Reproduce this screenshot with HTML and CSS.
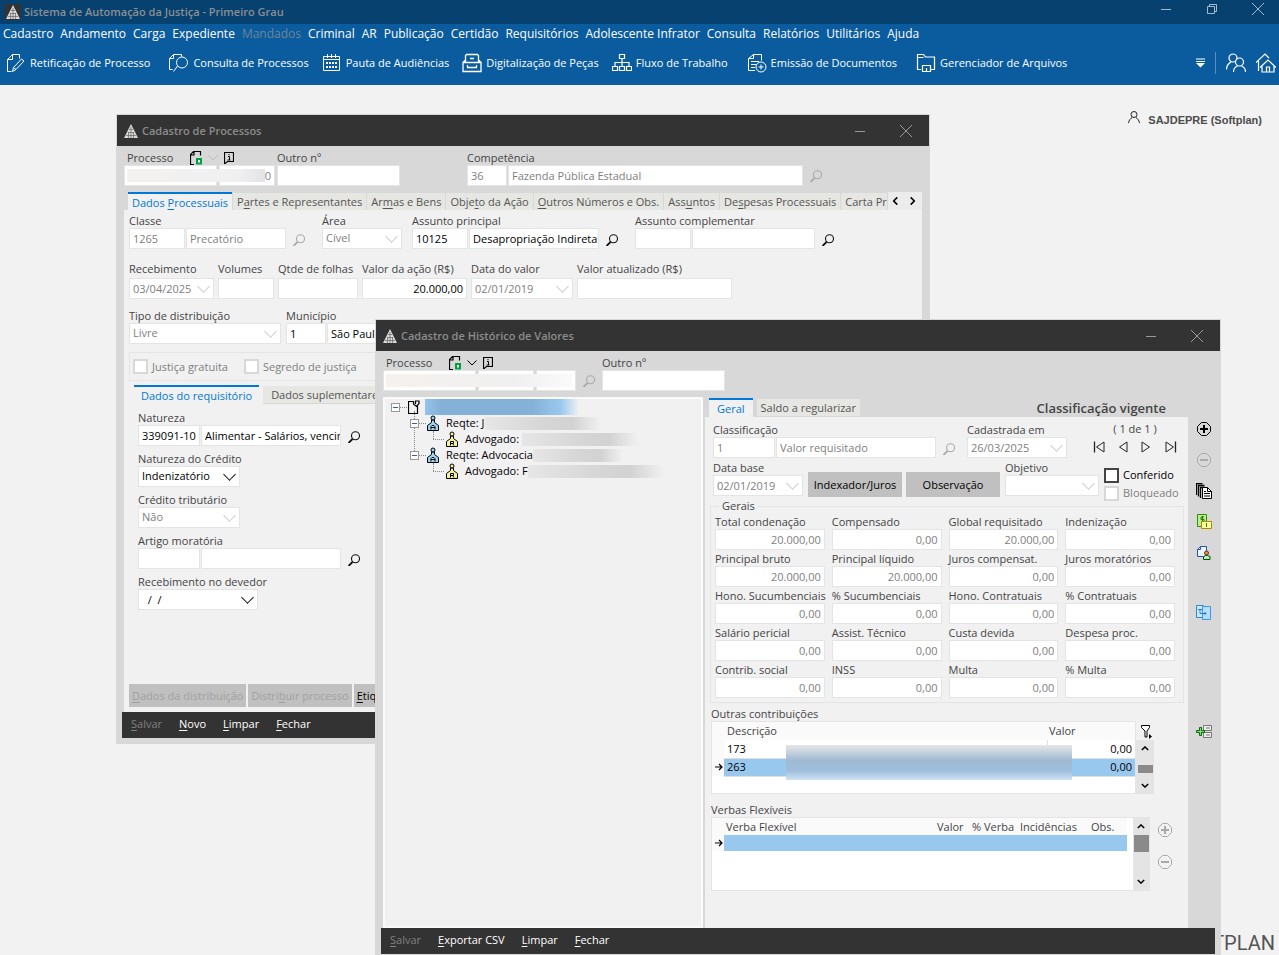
FILE: index.html
```html
<!DOCTYPE html>
<html lang="pt-BR">
<head>
    <meta charset="UTF-8">
    <meta name="viewport" content="width=device-width, initial-scale=1.0">
    <title>Sistema de Automação da Justiça - Primeiro Grau</title>
    <link rel="stylesheet" href="styles.css">
</head>
<body>
    <!-- icons -->
    <svg class="sprite" aria-hidden="true">
        <symbol id="logo" viewBox="0 0 14 14">
            <path d="M7 0L14 14H0z" fill="#d8d8d8"/>
            <path d="M5 5.500h4M4 8.500h6M2 11.500h10M7 3v11M4.500 8v6M9.500 8v6" stroke="#555" stroke-width=".6" fill="none"/>
        </symbol>
        <symbol id="i-min" viewBox="0 0 12 12"><path d="M1 6.5h10" stroke="currentColor" fill="none"/></symbol>
        <symbol id="i-restore" viewBox="0 0 12 12"><path d="M1.5 3.5h7v7h-7zM3.5 3.5v-2h7v7h-2" stroke="currentColor" fill="none"/></symbol>
        <symbol id="i-close" viewBox="0 0 12 12"><path d="M0 0L12 12M12 0L0 12" stroke="currentColor" fill="none"/></symbol>
        <symbol id="i-edit" viewBox="0 0 20 20"><path d="M5.500 18.500h-4v-12l5-5h7v4M1.500 6.500h5v-5M7.500 14.500l8-8.500 2.500 2-8 8.500-3.500 2zM7.500 14.500l2.500 2" stroke="#fff" fill="none"/></symbol>
        <symbol id="i-find" viewBox="0 0 20 20"><path d="M3.500 16.500h-3v-11l4-4h8v2M.5 5.500h4v-4M8.500 13l-4 5.500" stroke="#fff" fill="none"/><circle cx="13" cy="9.500" r="5.500" stroke="#fff" fill="none"/></symbol>
        <symbol id="i-cal" viewBox="0 0 20 20"><path d="M1.500 3.500h16v14h-16zM1.500 6.500h16M5.500 1v4M9.500 1v4M13.500 1v4" stroke="#fff" fill="none"/><path d="M4 9h2v2H4zM7 9h2v2H7zM10 9h2v2h-2zM13 9h2v2h-2zM4 13h2v2H4zM7 13h2v2H7zM10 13h2v2h-2zM13 13h2v2h-2z" fill="#fff"/></symbol>
        <symbol id="i-scan" viewBox="0 0 20 20"><path d="M3.500 9V2.500l1-1h11l1 1V9M1 9.500h18v9H1zM1 9.500l2-2M19 9.500l-2-2M5.500 12v2.500h9V12M8 5.500h4" stroke="#fff" stroke-width="1.300" fill="none"/></symbol>
        <symbol id="i-flow" viewBox="0 0 20 20"><path d="M7.500 1.500h5v4h-5zM.5 13.500h5v4h-5zM7.500 13.500h5v4h-5zM14.500 13.500h5v4h-5zM10 5.500v8M3 13v-3.500h14V13" stroke="#fff" stroke-width="1.200" fill="none"/></symbol>
        <symbol id="i-doc" viewBox="0 0 20 20"><path d="M8 17.500H1.500v-12l5-4h8v6M1.500 5.500h5v-4M4 8.500h8M4 11.500h5M4 14.500h4" stroke="#fff" fill="none"/><circle cx="14" cy="14" r="5" stroke="#fff" fill="none"/><path d="M11.500 14h5M14 11.500v5" stroke="#fff"/></symbol>
        <symbol id="i-folder" viewBox="0 0 20 20"><path d="M5 16.500H1.500v-15h6l2 2.500h9v12.500H15M1.500 4.500h6M6.500 12.500h8v6h-8zM10.500 15v3" stroke="#fff" stroke-width="1.200" fill="none"/></symbol>
        <symbol id="i-users" viewBox="0 0 20 20"><circle cx="7" cy="5" r="4" stroke="#fff" stroke-width="1.200" fill="none"/><circle cx="13.500" cy="9" r="4" stroke="#fff" stroke-width="1.200" fill="#0b5c9e"/><path d="M.5 16.500c0-4 2-6 4.500-7.500M7.500 19c0-3 1.500-5 4-6M19.500 19c0-3-1.500-5-4-6" stroke="#fff" stroke-width="1.200" fill="none"/></symbol>
        <symbol id="i-home" viewBox="0 0 20 20"><path d="M0 9.500L9 1l4 4M2.500 8v10M4 14.500L12 7l8 7.500M6 13v6h12v-6M10.500 19v-5h3v5" stroke="#fff" stroke-width="1.200" fill="none"/></symbol>
        <symbol id="i-user" viewBox="0 0 12 12"><circle cx="6" cy="3.500" r="3" stroke="currentColor" fill="none"/><path d="M.5 12c.3-2.500 2-4.500 3.500-5.500M11.500 12c-.3-2.500-2-4.500-3.500-5.500" stroke="currentColor" fill="none"/></symbol>
        <symbol id="i-search" viewBox="0 0 12 12"><circle cx="7.500" cy="4.800" r="4" stroke="currentColor" stroke-width="1.100" fill="none"/><path d="M4.500 8L.5 12" stroke="currentColor" stroke-width="1.800"/></symbol>
        <symbol id="i-new" viewBox="0 0 12 14"><path d="M4 13.500H.5V3.500l3-3h7v4M.5 4h3.500V.5" stroke="currentColor" stroke-width="1.200" fill="none"/><path d="M7 8h4v4.500H7z" fill="#fff" stroke="#00a03c" stroke-width="2"/></symbol>
        <symbol id="i-chev" viewBox="0 0 10 6"><path d="M.5 .5L5 5l4.500-4.500" stroke="currentColor" fill="none"/></symbol>
        <symbol id="i-arr" viewBox="0 0 10 6"><path d="M1 1L5 5l4-4" stroke="currentColor" stroke-width="1.800" fill="none"/></symbol>
        <symbol id="i-info" viewBox="0 0 10 12"><path d="M.5 .5h9v9h-6l-3 2.500z" fill="none" stroke="currentColor" stroke-width="1.200"/><path d="M5 2v1.200M4 4.500h1.500V8M3.500 8h3" stroke="currentColor" fill="none"/></symbol>
        <symbol id="i-page" viewBox="0 0 12 14"><path d="M9.500 6v7.500h-9v-12h5v2.500l3 2.500 2.500-3v-2.500h-3.500v3" fill="none" stroke="#000" stroke-width="1.200"/></symbol>
        <symbol id="i-pa" viewBox="0 0 12 16"><path d="M4.500 5v2.500l-4 3v5h11v-5l-4-3V5z" fill="#9fd4f5" stroke="#000"/><circle cx="6" cy="3" r="2" fill="#9fd4f5" stroke="#000"/><path d="M4 14.500v-3l1-1h2l1 1v3M4 12.500h4" fill="none" stroke="#000"/></symbol>
        <symbol id="i-pr" viewBox="0 0 12 16"><path d="M4.500 5v2.500l-4 3v5h11v-5l-4-3V5z" fill="#f8f39a" stroke="#000"/><circle cx="6" cy="3" r="2" fill="#f8f39a" stroke="#000"/><path d="M4.500 14.500v-4h3v2h-3M6.500 12.500l1.500 2" fill="none" stroke="#000"/></symbol>
        <symbol id="i-prev" viewBox="0 0 12 12"><path d="M10 1v10L2.500 6z" fill="none" stroke="currentColor"/></symbol>
        <symbol id="i-next" viewBox="0 0 12 12"><path d="M1 1v10L8.500 6z" fill="none" stroke="currentColor"/></symbol>
        <symbol id="i-first" viewBox="0 0 12 12"><path d="M11 1v10L3.500 6z" fill="none" stroke="currentColor"/><path d="M1.500 .5v11" stroke="currentColor" stroke-width="1.300"/></symbol>
        <symbol id="i-last" viewBox="0 0 12 12"><path d="M1 1v10L8.500 6z" fill="none" stroke="currentColor"/><path d="M10.500 .5v11" stroke="currentColor" stroke-width="1.300"/></symbol>
        <symbol id="i-plus" viewBox="0 0 14 14"><path d="M4.500 .5h5l4 4v5l-4 4h-5l-4-4v-5z" fill="none" stroke="currentColor"/><path d="M3 7h8M7 3v8" stroke="currentColor" stroke-width="2"/></symbol>
        <symbol id="i-minus" viewBox="0 0 14 14"><path d="M4.500 .5h5l4 4v5l-4 4h-5l-4-4v-5z" fill="none" stroke="currentColor"/><path d="M3 7h8" stroke="currentColor" stroke-width="2"/></symbol>
        <symbol id="i-pages" viewBox="0 0 16 16"><path d="M.5 12V.5h6M2.500 13.500v-11h6M4.500 15V4.500h4" fill="none" stroke="#000" stroke-width="1.300"/><path d="M6.500 4.500h5l4 4v7h-9z" fill="#fff" stroke="#000"/><path d="M11.500 4.500v4h4M8 8.500h2M8 10.500h6M8 13h6" stroke="#000" fill="none"/></symbol>
        <symbol id="i-money" viewBox="0 0 16 16"><path d="M1.500 .5h9v12h-9z" fill="#b9f08c" stroke="#2f8f12"/><path d="M8 3H5v2.500h3V8H5M6.500 2v8" stroke="#207a0c" fill="none"/><path d="M5.500 7.500h10v7h-10z" fill="#ffff9c" stroke="#b58800"/><path d="M10.500 9v4" stroke="#207a0c"/></symbol>
        <symbol id="i-docuser" viewBox="0 0 16 16"><path d="M4.500 1.500h6v10h-9v-7z" fill="#eef4ff" stroke="#2454b8"/><path d="M1.500 4.500h3v-3" stroke="#2454b8" fill="none"/><circle cx="10.500" cy="8" r="2" fill="#e08b5a" stroke="#7a2b0a"/><path d="M7.500 14.500v-3l2-1h2l2.500 1v3z" fill="#b8f0a8" stroke="#064c14"/></symbol>
        <symbol id="i-link" viewBox="0 0 16 16"><path d="M.5 1.500h7v12h-7z" fill="#cfe7fb" stroke="#2a8ad8"/><path d="M6.500 2.500h8v13h-8z" fill="#b9dcff" stroke="#3b9ae6"/><path d="M2 5.500h4M4 5.500v4h6M8.500 8l1.500 1.500L8.500 11" stroke="#1f7fd0" fill="none"/></symbol>
        <symbol id="i-add" viewBox="0 0 16 14"><path d="M7.500 .5h8v5h-8zM7.500 7.500h8v5h-8zM10 3h4M10 10h4" fill="#eee" stroke="#777"/><path d="M.5 5.500h3v-3h2v3h3v2h-3v3h-2v-3h-3z" fill="#7de070" stroke="#0b6a10"/></symbol>
        <symbol id="i-filter" viewBox="0 0 11 14"><path d="M.5 .5h8v2L6 6v6H4V6L.5 2.500z" fill="#fff" stroke="#000"/><path d="M8 9v5l3-2.500z"/></symbol>
        <symbol id="i-arrow" viewBox="0 0 8 8"><path d="M0 4h7M4 1l3 3-3 3" fill="none" stroke="#000" stroke-width="1.200"/></symbol>
        <symbol id="i-overflow" viewBox="0 0 10 10"><path d="M1 1h9M1 3.500h9" stroke="#fff"/><path d="M1 5h9L5.500 9.500z" fill="#fff"/></symbol>
    </svg>

    <header class="app-header">
        <div class="app-title">
            <span class="app-logo"><svg><use href="#logo"/></svg></span>
            <strong>Sistema de Automação da Justiça - Primeiro Grau</strong>
            <div class="win-buttons">
                <button aria-label="Minimizar"><svg><use href="#i-min"/></svg></button>
                <button aria-label="Restaurar"><svg><use href="#i-restore"/></svg></button>
                <button aria-label="Fechar"><svg><use href="#i-close"/></svg></button>
            </div>
        </div>
        <nav class="menu">
            <a href="#">Cadastro</a>
            <a href="#">Andamento</a>
            <a href="#">Carga</a>
            <a href="#">Expediente</a>
            <a href="#" class="off">Mandados</a>
            <a href="#">Criminal</a>
            <a href="#">AR</a>
            <a href="#">Publicação</a>
            <a href="#">Certidão</a>
            <a href="#">Requisitórios</a>
            <a href="#">Adolescente Infrator</a>
            <a href="#">Consulta</a>
            <a href="#">Relatórios</a>
            <a href="#">Utilitários</a>
            <a href="#">Ajuda</a>
        </nav>
        <div class="toolbar">
            <button><svg><use href="#i-edit"/></svg>Retificação de Processo</button>
            <button class="spaced"><svg><use href="#i-find"/></svg>Consulta de Processos</button>
            <button><svg><use href="#i-cal"/></svg>Pauta de Audiências</button>
            <button><svg><use href="#i-scan"/></svg>Digitalização de Peças</button>
            <button><svg><use href="#i-flow"/></svg>Fluxo de Trabalho</button>
            <button class="spaced"><svg><use href="#i-doc"/></svg>Emissão de Documentos</button>
            <button class="spaced"><svg><use href="#i-folder"/></svg>Gerenciador de Arquivos</button>
            <div class="toolbar-end">
                <button aria-label="Mais"><svg class="small"><use href="#i-overflow"/></svg></button>
                <span class="divider"></span>
                <button aria-label="Usuários"><svg><use href="#i-users"/></svg></button>
                <button aria-label="Início"><svg><use href="#i-home"/></svg></button>
            </div>
        </div>
    </header>

    <main class="desktop">
        <div class="user"><svg><use href="#i-user"/></svg><strong>SAJDEPRE (Softplan)</strong></div>
        <div class="brand">SOFTPLAN</div>

        <!-- Cadastro de Processos -->
        <section class="window win-processos">
            <div class="titlebar">
                <svg class="logo"><use href="#logo"/></svg>
                <strong>Cadastro de Processos</strong>
                <div class="win-buttons">
                    <button aria-label="Minimizar"><svg><use href="#i-min"/></svg></button>
                    <button aria-label="Fechar"><svg><use href="#i-close"/></svg></button>
                </div>
            </div>
            <div class="head">
                <div class="field">
                    <div class="label-row">
                        <label for="p1">Processo</label>
                        <svg class="i-new"><use href="#i-new"/></svg>
                        <svg class="i-chev light"><use href="#i-chev"/></svg>
                        <svg class="i-info"><use href="#i-info"/></svg>
                    </div>
                    <div class="inputs redacted">
                        <input id="p1" class="w-93">
                        <input class="w-56 right" value="0" disabled aria-label="Foro">
                    </div>
                </div>
                <div class="field"><label for="p2">Outro nº</label><input id="p2" class="w-123"></div>
                <div class="field competencia">
                    <label for="p3">Competência</label>
                    <div class="inputs">
                        <input id="p3" class="w-40" value="36" disabled>
                        <input class="w-295" value="Fazenda Pública Estadual" disabled aria-label="Descrição da competência">
                    </div>
                </div>
                <button class="lookup" disabled aria-label="Pesquisar"><svg><use href="#i-search"/></svg></button>
            </div>
            <div class="tabs">
                <button class="tab active">Dados <u>P</u>rocessuais</button>
                <button class="tab">P<u>a</u>rtes e Representantes</button>
                <button class="tab">Ar<u>m</u>as e Bens</button>
                <button class="tab">Obje<u>t</u>o da Ação</button>
                <button class="tab"><u>O</u>utros Números e Obs.</button>
                <button class="tab">Ass<u>u</u>ntos</button>
                <button class="tab">De<u>s</u>pesas Processuais</button>
                <button class="tab cut">Carta Pr</button>
                <div class="tab-nav">
                    <button aria-label="Anterior"><svg class="turn-r"><use href="#i-arr"/></svg></button>
                    <button aria-label="Próxima"><svg class="turn-l"><use href="#i-arr"/></svg></button>
                </div>
            </div>
            <div class="panel">
                <div class="row wide">
                    <div class="field">
                        <label for="c1">Classe</label>
                        <div class="inputs">
                            <input id="c1" class="w-56" value="1265" disabled>
                            <input class="w-100" value="Precatório" disabled aria-label="Descrição da classe">
                            <button class="lookup" disabled aria-label="Pesquisar"><svg><use href="#i-search"/></svg></button>
                        </div>
                    </div>
                    <div class="field">
                        <label for="c2">Área</label>
                        <div class="combo off w-80"><select id="c2" disabled><option>Cível</option></select></div>
                    </div>
                    <div class="field">
                        <label for="c3">Assunto principal</label>
                        <div class="inputs">
                            <input id="c3" class="w-56" value="10125">
                            <input class="w-130" value="Desapropriação Indireta" aria-label="Descrição do assunto">
                            <button class="lookup" aria-label="Pesquisar"><svg><use href="#i-search"/></svg></button>
                        </div>
                    </div>
                    <div class="field">
                        <label for="c4">Assunto complementar</label>
                        <div class="inputs">
                            <input id="c4" class="w-56">
                            <input class="w-123" aria-label="Descrição do assunto complementar">
                            <button class="lookup" aria-label="Pesquisar"><svg><use href="#i-search"/></svg></button>
                        </div>
                    </div>
                </div>
                <div class="row datas">
                    <div class="field"><label for="r1">Recebimento</label><div class="combo off w-85"><input id="r1" value="03/04/2025" disabled></div></div>
                    <div class="field"><label for="r2">Volumes</label><input id="r2" class="w-56"></div>
                    <div class="field"><label for="r3">Qtde de folhas</label><input id="r3" class="w-80"></div>
                    <div class="field"><label for="r4">Valor da ação (R$)</label><input id="r4" class="w-105 right" value="20.000,00"></div>
                    <div class="field"><label for="r5">Data do valor</label><div class="combo off w-102"><input id="r5" value="02/01/2019" disabled></div></div>
                    <div class="field"><label for="r6">Valor atualizado (R$)</label><input id="r6" class="w-155"></div>
                </div>
                <div class="row distrib">
                    <div class="field"><label for="d1">Tipo de distribuição</label><div class="combo off w-152"><select id="d1" disabled><option>Livre</option></select></div></div>
                    <div class="field">
                        <label for="d2">Município</label>
                        <div class="inputs">
                            <input id="d2" class="w-40" value="1">
                            <input class="w-155" value="São Paulo" aria-label="Nome do município">
                        </div>
                    </div>
                </div>
                <div class="flags">
                    <label class="check off"><input type="checkbox" disabled>Justiça gratuita</label>
                    <label class="check off"><input type="checkbox" disabled>Segredo de justiça</label>
                </div>
                <div class="tabs sub">
                    <button class="tab active">Dados do requisitório</button>
                    <button class="tab">Dados suplementares</button>
                </div>
                <div class="requisitorio">
                    <div class="field">
                        <label for="q1">Natureza</label>
                        <div class="inputs">
                            <input id="q1" class="w-62" value="339091-10">
                            <input class="w-140" value="Alimentar - Salários, vencimentos" aria-label="Descrição da natureza">
                            <button class="lookup" aria-label="Pesquisar"><svg><use href="#i-search"/></svg></button>
                        </div>
                    </div>
                    <div class="field"><label for="q2">Natureza do Crédito</label><div class="combo w-102"><select id="q2"><option>Indenizatório</option></select></div></div>
                    <div class="field"><label for="q3">Crédito tributário</label><div class="combo off w-102"><select id="q3" disabled><option>Não</option></select></div></div>
                    <div class="field">
                        <label for="q4">Artigo moratória</label>
                        <div class="inputs">
                            <input id="q4" class="w-62">
                            <input class="w-140" aria-label="Descrição do artigo">
                            <button class="lookup" aria-label="Pesquisar"><svg><use href="#i-search"/></svg></button>
                        </div>
                    </div>
                    <div class="field"><label for="q5">Recebimento no devedor</label><div class="combo w-120"><input id="q5" value="  /  /"></div></div>
                </div>
                <div class="actions">
                    <button class="btn" disabled><u>D</u>ados da distribuição</button>
                    <button class="btn" disabled>Distri<u>b</u>uir processo</button>
                    <button class="btn"><u>E</u>tiqueta</button>
                </div>
            </div>
            <div class="footer">
                <button disabled><u>S</u>alvar</button>
                <button><u>N</u>ovo</button>
                <button><u>L</u>impar</button>
                <button><u>F</u>echar</button>
            </div>
        </section>

        <!-- Cadastro de Histórico de Valores -->
        <section class="window win-valores">
            <div class="titlebar">
                <svg class="logo"><use href="#logo"/></svg>
                <strong>Cadastro de Histórico de Valores</strong>
                <div class="win-buttons">
                    <button aria-label="Minimizar"><svg><use href="#i-min"/></svg></button>
                    <button aria-label="Fechar"><svg><use href="#i-close"/></svg></button>
                </div>
            </div>
            <div class="head">
                <div class="field">
                    <div class="label-row">
                        <label for="h1">Processo</label>
                        <svg class="i-new"><use href="#i-new"/></svg>
                        <svg class="i-chev"><use href="#i-chev"/></svg>
                        <svg class="i-info"><use href="#i-info"/></svg>
                    </div>
                    <div class="inputs redacted long">
                        <input id="h1" class="w-93">
                        <input class="w-56" aria-label="Foro">
                        <input class="w-40" aria-label="Dígito">
                    </div>
                </div>
                <button class="lookup" disabled aria-label="Pesquisar"><svg><use href="#i-search"/></svg></button>
                <div class="field"><label for="h2">Outro nº</label><input id="h2" class="w-123"></div>
            </div>
            <div class="body">
                <ul class="tree">
                    <li>
                        <div class="node"><button class="toggle" aria-label="Recolher"></button><svg class="i-page"><use href="#i-page"/></svg><span class="blur selected"></span></div>
                        <ul>
                            <li>
                                <div class="node"><button class="toggle" aria-label="Recolher"></button><svg><use href="#i-pa"/></svg>Reqte: J<span class="blur b-120"></span></div>
                                <ul><li><div class="node leaf"><svg><use href="#i-pr"/></svg>Advogado: <span class="blur b-120"></span></div></li></ul>
                            </li>
                            <li>
                                <div class="node"><button class="toggle" aria-label="Recolher"></button><svg><use href="#i-pa"/></svg>Reqte: Advocacia<span class="blur b-100"></span></div>
                                <ul><li><div class="node leaf"><svg><use href="#i-pr"/></svg>Advogado: F<span class="blur b-140"></span></div></li></ul>
                            </li>
                        </ul>
                    </li>
                </ul>
                <div class="detail">
                    <div class="tabs">
                        <button class="tab active">Geral</button>
                        <button class="tab">Saldo a regularizar</button>
                        <h2>Classificação vigente</h2>
                    </div>
                    <div class="panel">
                        <div class="row">
                            <div class="field">
                                <label for="g1">Classificação</label>
                                <div class="inputs">
                                    <input id="g1" class="w-62" value="1" disabled>
                                    <input class="w-160" value="Valor requisitado" disabled aria-label="Descrição da classificação">
                                    <button class="lookup" disabled aria-label="Pesquisar"><svg><use href="#i-search"/></svg></button>
                                </div>
                            </div>
                            <div class="field"><label for="g2">Cadastrada em</label><div class="combo off w-100"><input id="g2" value="26/03/2025" disabled></div></div>
                            <div class="pager">
                                <span>( 1 de 1 )</span>
                                <div class="pager-buttons">
                                    <button aria-label="Primeiro"><svg><use href="#i-first"/></svg></button>
                                    <button aria-label="Anterior"><svg><use href="#i-prev"/></svg></button>
                                    <button aria-label="Próximo"><svg><use href="#i-next"/></svg></button>
                                    <button aria-label="Último"><svg><use href="#i-last"/></svg></button>
                                </div>
                            </div>
                        </div>
                        <div class="row second">
                            <div class="field"><label for="g3">Data base</label><div class="combo off w-90"><input id="g3" value="02/01/2019" disabled></div></div>
                            <button class="btn w-94">Indexador/Juros</button>
                            <button class="btn w-94">Observação</button>
                            <div class="field"><label for="g4">Objetivo</label><div class="combo off w-94"><select id="g4" disabled><option></option></select></div></div>
                            <div class="checks">
                                <label class="check"><input type="checkbox">Conferido</label>
                                <label class="check off"><input type="checkbox" disabled>Bloqueado</label>
                            </div>
                        </div>
                        <fieldset class="gerais">
                            <legend>Gerais</legend>
                            <div class="values">
                                <div class="field"><label for="v1">Total condenação</label><input id="v1" value="20.000,00" disabled></div>
                                <div class="field"><label for="v2">Compensado</label><input id="v2" value="0,00" disabled></div>
                                <div class="field"><label for="v3">Global requisitado</label><input id="v3" value="20.000,00" disabled></div>
                                <div class="field"><label for="v4">Indenização</label><input id="v4" value="0,00" disabled></div>
                                <div class="field"><label for="v5">Principal bruto</label><input id="v5" value="20.000,00" disabled></div>
                                <div class="field"><label for="v6">Principal líquido</label><input id="v6" value="20.000,00" disabled></div>
                                <div class="field"><label for="v7">Juros compensat.</label><input id="v7" value="0,00" disabled></div>
                                <div class="field"><label for="v8">Juros moratórios</label><input id="v8" value="0,00" disabled></div>
                                <div class="field"><label for="v9">Hono. Sucumbenciais</label><input id="v9" value="0,00" disabled></div>
                                <div class="field"><label for="v10">% Sucumbenciais</label><input id="v10" value="0,00" disabled></div>
                                <div class="field"><label for="v11">Hono. Contratuais</label><input id="v11" value="0,00" disabled></div>
                                <div class="field"><label for="v12">% Contratuais</label><input id="v12" value="0,00" disabled></div>
                                <div class="field"><label for="v13">Salário pericial</label><input id="v13" value="0,00" disabled></div>
                                <div class="field"><label for="v14">Assist. Técnico</label><input id="v14" value="0,00" disabled></div>
                                <div class="field"><label for="v15">Custa devida</label><input id="v15" value="0,00" disabled></div>
                                <div class="field"><label for="v16">Despesa proc.</label><input id="v16" value="0,00" disabled></div>
                                <div class="field"><label for="v17">Contrib. social</label><input id="v17" value="0,00" disabled></div>
                                <div class="field"><label for="v18">INSS</label><input id="v18" value="0,00" disabled></div>
                                <div class="field"><label for="v19">Multa</label><input id="v19" value="0,00" disabled></div>
                                <div class="field"><label for="v20">% Multa</label><input id="v20" value="0,00" disabled></div>
                            </div>
                        </fieldset>

                        <div class="grid-title">Outras contribuições</div>
                        <div class="grid outras">
                            <div class="grid-box">
                                <table>
                                    <thead><tr><th class="mark"></th><th class="code">Descrição</th><th></th><th class="val">Valor</th></tr></thead>
                                    <tbody>
                                        <tr><td class="mark"></td><td class="code">173</td><td></td><td class="right line">0,00</td></tr>
                                        <tr class="current"><td class="mark"><svg><use href="#i-arrow"/></svg></td><td class="code">263</td><td></td><td class="right">0,00</td></tr>
                                    </tbody>
                                </table>
                                <span class="smudge"></span>
                            </div>
                            <div class="grid-side">
                                <button class="filter" aria-label="Filtrar"><svg><use href="#i-filter"/></svg></button>
                                <div class="scroll low"><svg class="flip"><use href="#i-arr"/></svg><span class="thumb"></span><svg><use href="#i-arr"/></svg></div>
                            </div>
                        </div>

                        <div class="grid-title second">Verbas Flexíveis</div>
                        <div class="grid verbas">
                            <div class="grid-box">
                                <table>
                                    <thead><tr><th class="mark"></th><th class="name">Verba Flexível</th><th class="v-valor">Valor</th><th class="v-verba">% Verba</th><th class="v-inc">Incidências</th><th class="v-obs">Obs.</th></tr></thead>
                                    <tbody><tr class="current"><td class="mark"><svg><use href="#i-arrow"/></svg></td><td></td><td></td><td></td><td></td><td></td></tr></tbody>
                                </table>
                                <div class="scroll"><svg class="flip"><use href="#i-arr"/></svg><span class="thumb"></span><svg><use href="#i-arr"/></svg></div>
                            </div>
                            <div class="grid-buttons">
                                <button disabled aria-label="Adicionar"><svg><use href="#i-plus"/></svg></button>
                                <button disabled aria-label="Remover"><svg><use href="#i-minus"/></svg></button>
                            </div>
                        </div>
                    </div>
                </div>
                <div class="side">
                    <button aria-label="Adicionar"><svg class="s14"><use href="#i-plus"/></svg></button>
                    <button disabled aria-label="Remover"><svg class="s14"><use href="#i-minus"/></svg></button>
                    <button aria-label="Documentos"><svg><use href="#i-pages"/></svg></button>
                    <button aria-label="Valores"><svg><use href="#i-money"/></svg></button>
                    <button aria-label="Partes"><svg><use href="#i-docuser"/></svg></button>
                    <button class="after-1" aria-label="Vincular"><svg><use href="#i-link"/></svg></button>
                    <button class="after-2" aria-label="Incluir contribuição"><svg><use href="#i-add"/></svg></button>
                </div>
            </div>
            <div class="footer">
                <button disabled><u>S</u>alvar</button>
                <button><u>E</u>xportar CSV</button>
                <button><u>L</u>impar</button>
                <button><u>F</u>echar</button>
            </div>
        </section>
    </main>
</body>
</html>
```

FILE: styles.css
```css
* { box-sizing: border-box; }
body { margin: 0; height: 100vh; display: flex; flex-direction: column; overflow: hidden; background: #f2f2f2; font-family: "Open Sans", "Noto Sans", sans-serif; font-size: 11px; line-height: 14px; color: #444; }
button, input, select { font: inherit; color: inherit; margin: 0; border-radius: 0; }
button { border: none; background: none; padding: 0; white-space: nowrap; }
svg { display: block; flex: none; }
ul { list-style: none; margin: 0; padding: 0; }
.sprite { position: absolute; width: 0; height: 0; }
u { text-underline-offset: 2px; }

/* main bar */
.app-header { background: #0b5c9e; color: #fff; height: 85px; flex: none; }
.app-title { display: flex; align-items: center; height: 24px; background: #06416f; color: #8b8f92; }
.app-title strong { font-weight: 600; }
.app-logo { margin: 0 3px 0 5px; padding: 1px; background: #333; }
.app-logo svg { width: 14px; height: 14px; }
.app-title .win-buttons { gap: 34px; margin-right: 15px; color: #a5bacb; padding-bottom: 6px; }
.win-buttons { display: flex; margin-left: auto; gap: 34px; }
.win-buttons svg { width: 12px; height: 12px; }
.menu { display: flex; gap: 7px; padding: 2px 3px 0; font-size: 12px; line-height: 16px; white-space: nowrap; }
.menu a { color: #fff; text-decoration: none; }
.menu a.off { color: #6f8496; }
.toolbar { display: flex; align-items: center; gap: 13px; padding: 0 3px 0 6px; height: 42px; }
.toolbar button { display: flex; align-items: center; gap: 4px; }
.toolbar .spaced { margin-left: 6px; }
.toolbar svg { width: 20px; height: 20px; }
.toolbar svg.small { width: 10px; height: 10px; }
.toolbar-end { display: flex; align-items: center; gap: 10px; margin-left: auto; }
.divider { width: 1px; height: 22px; background: #5a8fbd; }

/* desktop */
.desktop { position: relative; flex: 1; overflow: hidden; }
.user { position: absolute; top: 26px; right: 17px; display: flex; gap: 8px; color: #222; font-family: "Liberation Sans", Arial, sans-serif; line-height: 18px; }
.user strong { color: #4c4c4c; }
.user svg { width: 12px; height: 12px; }
.brand { position: absolute; right: 4px; bottom: 0; font-size: 20px; line-height: 24px; color: #555; font-family: "Roboto", sans-serif; }

/* windows */
.window { position: absolute; display: flex; flex-direction: column; background: #d8d8d8; border: 1px solid #d8d8d8; }
.win-processos { left: 116px; top: 29px; width: 814px; height: 630px; padding-bottom: 5px; }
.win-valores { left: 375px; top: 234px; width: 846px; height: 641px; padding-bottom: 5px; }
.titlebar { display: flex; align-items: center; height: 31px; flex: none; padding: 0 17px 0 7px; gap: 4px; background: #333; color: #8c8c8c; }
.titlebar strong { font-weight: 600; }
.titlebar .logo { width: 14px; height: 14px; }
.titlebar .win-buttons { color: #999; }
.head { display: flex; align-items: flex-end; gap: 2px; padding: 5px 7px 6px; }
.competencia { margin-left: 65px; }
.label-row { display: flex; align-items: center; gap: 6px; padding-left: 3px; height: 14px; color: #000; }
.label-row label { width: 57px; }
.i-new { width: 12px; height: 14px; }
.i-chev { width: 10px; height: 6px; }
.i-chev.light { color: #bbb; }
.i-info { width: 10px; height: 12px; }

/* fields */
.field { display: flex; flex-direction: column; align-items: flex-start; }
label { display: block; height: 14px; white-space: nowrap; color: #444; }
.inputs { display: flex; gap: 1px; position: relative; }
input, select { height: 21px; padding: 0 0 1px 3px; border: 1px solid #e4e4e4; background: #fff; color: #000; outline: none; }
input:disabled, select:disabled { color: #808080; opacity: 1; }
.right { text-align: right; }
input.right { padding-right: 3px; }
.lookup { display: flex; align-items: center; padding: 3px 7px 0 6px; color: #111; }
.lookup svg { width: 12px; height: 12px; }
.lookup:disabled { color: #aaa; }
.head .lookup { height: 21px; padding: 0 5px; }
.combo { position: relative; color: #111; }
.combo.off { color: #ccc; }
.combo input, .combo select { width: 100%; display: block; appearance: none; }
.combo::after { content: ""; position: absolute; right: 6px; top: 4px; width: 8px; height: 8px; border: solid currentColor; border-width: 0 1px 1px 0; transform: rotate(45deg); pointer-events: none; }
.redacted { gap: 2px; }
.redacted::after { content: ""; position: absolute; left: 3px; top: 4px; width: 138px; height: 13px; background: linear-gradient(90deg, #f3f1f0, #f0f0f0 80%, #e2e3e8); }
.redacted.long::after { width: 186px; background: linear-gradient(90deg, #f5f1ee, #f0f0f0 70%, #fafafa); }
.w-40 { width: 40px; }
.w-56 { width: 56px; }
.w-62 { width: 62px; }
.w-80 { width: 80px; }
.w-85 { width: 85px; }
.w-90 { width: 90px; }
.w-93 { width: 93px; }
.w-94 { width: 94px; }
.w-100 { width: 100px; }
.w-102 { width: 102px; }
.w-105 { width: 105px; }
.w-120 { width: 120px; }
.w-123 { width: 123px; }
.w-130 { width: 130px; }
.w-140 { width: 140px; }
.w-152 { width: 152px; }
.w-155 { width: 155px; }
.w-160 { width: 160px; }
.w-295 { width: 295px; }

/* tabs */
.tabs { display: flex; align-items: flex-end; height: 18px; flex: none; padding-left: 4px; gap: 1px; margin: 0 7px; overflow: hidden; }
.tab { height: 17px; padding: 1px 4px 0; line-height: 16px; background: #e6e6e2; color: #555; flex: none; }
.tab.active { height: 18px; background: #f1f1f1; color: #0078d7; border-top: 2px solid #0078d7; padding-top: 0; line-height: 15px; }
.tab.cut { flex: 1; min-width: 0; padding-right: 0; overflow: hidden; text-align: left; }
.tab-nav { display: flex; gap: 8px; width: 34px; height: 18px; padding-left: 3px; align-items: center; background: #ececec; color: #000; }
.tab-nav svg { width: 9px; height: 6px; }
.turn-r { transform: rotate(90deg); }
.turn-l { transform: rotate(-90deg); }
.panel { flex: 1; display: flex; flex-direction: column; background: #f1f1f1; }
.win-processos > .panel { margin: 0 7px; padding: 4px 4px 5px 5px; min-height: 0; }
.row { display: flex; align-items: flex-end; gap: 5px; }
.row.wide { gap: 10px; }
.row.datas { margin-top: 13px; gap: 4px; }
.row.datas label { margin-bottom: 2px; }
.row.distrib { margin-top: 10px; }
.flags { display: flex; gap: 16px; align-items: center; height: 29px; margin-top: 8px; padding-left: 3px; border: 1px solid #e4e4e4; flex: none; }
.check { display: flex; align-items: center; gap: 4px; height: 18px; color: #000; }
.check.off { color: #808080; }
.check input { appearance: none; width: 15px; height: 15px; padding: 0; border: 2px solid #444; }
.check.off input { border-color: #d8d8d8; }
.tabs.sub { margin: 4px 0 0; height: 19px; padding-left: 5px; gap: 4px; }
.tabs.sub .tab { height: 18px; padding: 0 8px; border-bottom: 1px solid #d8d8d8; }
.tabs.sub .tab.active { height: 19px; padding: 0 7px; border-bottom: none; }
.requisitorio { display: flex; flex-direction: column; gap: 6px; padding: 7px 0 0 9px; }
.actions { display: flex; gap: 2px; margin-top: auto; }
.btn { height: 23px; padding: 0 3px; background: #c0c0c0; color: #000; }
.btn:disabled { color: #a0a0a0; }
.footer { display: flex; align-items: center; gap: 17px; height: 26px; flex: none; margin: 0 5px; padding: 0 9px 2px; background: #333; color: #fff; }
.footer button:disabled { color: #808080; }

/* valores */
.body { flex: 1; display: flex; min-height: 0; padding-left: 7px; }
.tree { width: 320px; flex: none; margin-right: 2px; padding: 0 0 0 6px; border: 2px solid #fafafa; background: #f1f1f1; color: #000; overflow: hidden; }
.tree ul { padding-left: 19px; position: relative; }
.tree ul::before { content: ""; position: absolute; left: 23px; top: -4px; height: 12px; border-left: 1px dotted #888; }
.tree > li > ul::before { height: 40px; }
.tree ul ul::before { left: 23px; top: 0; height: 8px; }
.node { position: relative; display: flex; align-items: center; height: 16px; white-space: pre; }
.node svg { width: 12px; height: 16px; margin: 0 7px 0 8px; }
.node .i-page { height: 14px; margin-right: 5px; }
.node::before { content: ""; position: absolute; left: 9px; top: 8px; width: 7px; border-top: 1px dotted #888; }
.node.leaf { padding-left: 9px; }
.node.leaf::before { left: 4px; width: 11px; }
.toggle { width: 9px; height: 9px; border: 1px solid #999; background: #fff; position: relative; }
.toggle::before { content: ""; position: absolute; left: 1px; right: 1px; top: 3px; border-top: 1px solid #3b5ba5; }
.blur { height: 13px; background: linear-gradient(90deg, #e6e6e6, #d6d6d6 50%, #d2d2d2 75%, #f1f1f1); }
.blur.selected { width: 154px; height: 16px; background: linear-gradient(90deg, #93c3ea, #85b1d8 10%, #85b1d8 70%, #99c8ee 88%, #f1f1f1); }
.b-100 { width: 90px; }
.b-120 { width: 116px; }
.b-140 { width: 136px; }
.detail { flex: 1; display: flex; flex-direction: column; min-width: 0; }
.detail .tabs { height: 20px; margin: 0; gap: 4px; }
.detail .tab { margin-bottom: 1px; }
.detail .tab.active { height: 19px; padding: 0 8px; margin: 0; line-height: 14px; }
.detail h2 { margin: 0 22px 0 auto; font-size: 13px; font-weight: 600; line-height: 18px; color: #444; }
.detail .panel { padding: 6px 4px 0 5px; min-height: 0; }
.detail .row { padding-left: 3px; }
.row.second { margin-top: 3px; }
.row.second .btn { height: 25px; margin-bottom: -1px; }
.row.second .btn + .btn { margin-left: -1px; }
.pager { margin: 0 7px 0 auto; width: 84px; text-align: center; color: #444; align-self: stretch; line-height: 11px; }
.pager-buttons { display: flex; justify-content: space-between; margin-top: 7px; color: #222; }
.pager-buttons svg { width: 12px; height: 12px; }
.checks { display: flex; flex-direction: column; margin-bottom: -6px; }
.gerais { margin: 3px 0 0; padding: 2px 8px 4px 4px; border: 1px solid #e4e4e4; flex: none; min-width: 0; }
.gerais legend { padding: 0 3px; margin-left: 4px; height: 14px; }
.values { display: grid; grid-template-columns: repeat(4, 1fr); gap: 2px 7px; }
.values .field { min-width: 0; }
.values input { width: 100%; padding-right: 3px; text-align: right; }
.grid-title { margin-top: 4px; padding-left: 1px; height: 14px; flex: none; }
.grid-title.second { margin-top: 9px; }
.grid { display: flex; padding-left: 1px; flex: none; }
.grid-box { position: relative; background: #fff; border: 1px solid #e4e4e4; }
.grid table { border-collapse: collapse; table-layout: fixed; width: 100%; color: #000; }
.grid th { font-weight: normal; text-align: left; background: #fafafa; color: #444; padding: 0; height: 17px; }
.outras th { height: 18px; }
.grid td { padding: 0 3px; height: 18px; border-bottom: 1px solid #e0e0e0; }
.grid .mark { width: 12px; padding: 0; background: #fafafa; border: none; }
.grid .mark svg { width: 8px; height: 8px; margin-left: 3px; }
.grid .code { width: 60px; padding-left: 3px; }
.grid .name { padding-left: 2px; }
.grid .val { width: 88px; padding-left: 2px; }
.grid .line { border-left: 1px solid #e0e0e0; }
.current td { background: #99c8ee; }
.outras .grid-box { width: 425px; height: 73px; }
.smudge { position: absolute; left: 74px; top: 23px; width: 286px; height: 35px; background: linear-gradient(180deg, #e6e6e6, #9fb9d2 45%, #9fbfdd 75%, #cfe3f5); }
.grid-side { width: 18px; display: flex; flex-direction: column; }
.filter { height: 19px; padding: 3px 0 0 5px; }
.filter svg { width: 11px; height: 14px; }
.scroll { display: flex; flex-direction: column; align-items: center; flex: 1; padding: 6px 0; background: #e4e4e4; }
.scroll svg { width: 8px; height: 5px; color: #000; }
.flip { transform: rotate(180deg); }
.thumb { width: 15px; height: 17px; margin: 6px 0 auto; background: #8a8a8a; }
.scroll.low .thumb { height: 8px; margin-top: 14px; }
.verbas .grid-box { display: flex; width: 439px; height: 74px; }
.verbas table { width: 415px; flex: none; align-self: flex-start; }
.verbas td { height: 16px; border: none; }
.verbas .scroll { flex: none; width: 16px; margin-left: auto; }
.v-valor { width: 35px; }
.v-verba { width: 48px; }
.v-inc { width: 71px; }
.v-obs { width: 36px; }
.grid-buttons { display: flex; flex-direction: column; gap: 18px; padding: 6px 8px; }
.grid-buttons svg { width: 14px; height: 14px; }
.grid-buttons button:disabled, .side button:disabled { color: #aaa; }
.side { width: 32px; flex: none; padding-top: 24px; display: flex; flex-direction: column; align-items: center; gap: 15px; color: #000; }
.side svg { width: 16px; height: 16px; }
.side .s14 { width: 14px; height: 16px; }
.side .after-1 { margin-top: 28px; }
.side .after-2 { margin-top: 89px; }
```
